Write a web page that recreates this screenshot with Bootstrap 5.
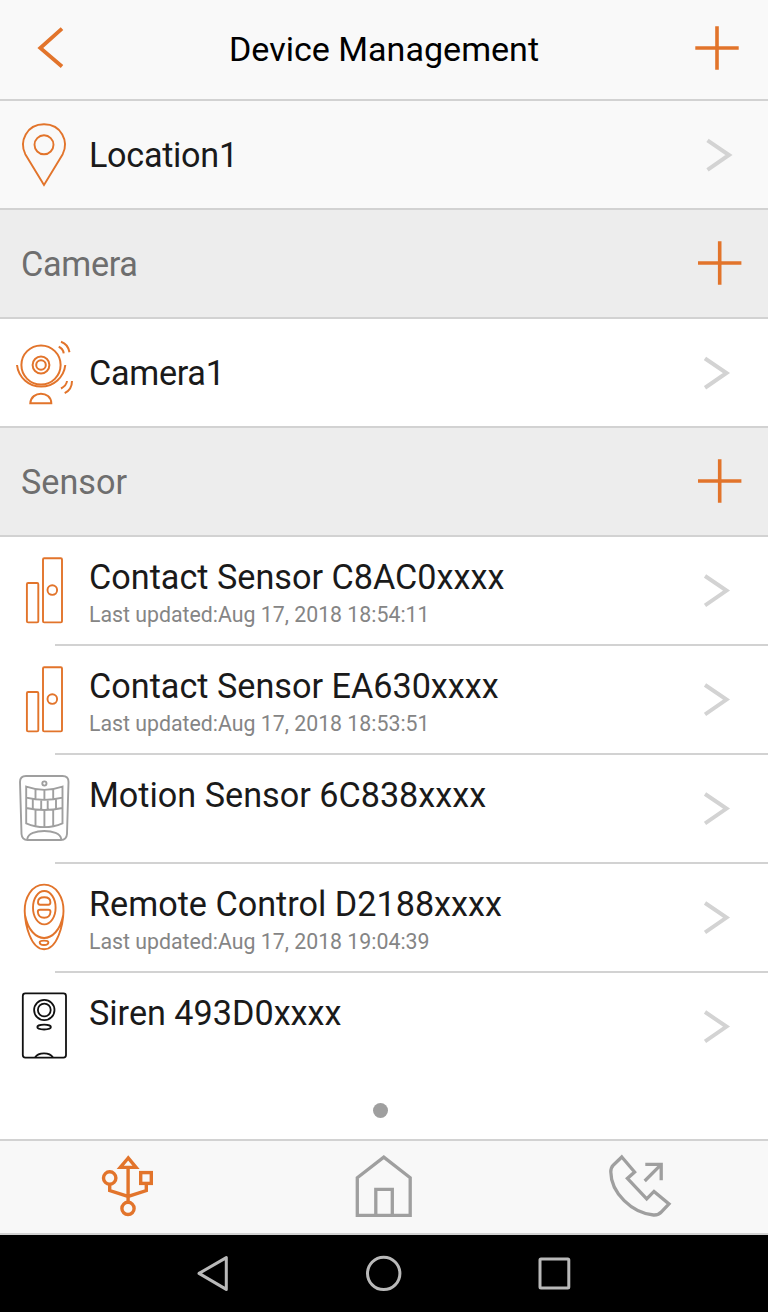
<!DOCTYPE html>
<html lang="en">
<head>
<meta charset="utf-8">
<meta name="viewport" content="width=device-width, initial-scale=1">
<title>Device Management</title>
<link href="https://cdn.jsdelivr.net/npm/bootstrap@5.3.0/dist/css/bootstrap.min.css" rel="stylesheet">
<style>
  :root { --accent: #e2742b; --line: #d2d2d2; --grey: #9f9f9f; }
  body { font-family: Roboto, "Liberation Sans", sans-serif; background: #fff; color: #1a1a1a; }
  .screen { width: 768px; height: 1312px; overflow: hidden; }
  svg { display: block; flex: none; fill: none; }
  .orange { stroke: var(--accent); }
  .grey { stroke: var(--grey); }
  .topbar { height: 101px; background: #f9f9f9; border-bottom: 2px solid var(--line); }
  .topbar h1 { font-size: 34.1px; line-height: 98px; color: #000; }
  .device-row { height: 109px; border-bottom: 2px solid var(--line); }
  .device-row.tinted { background: #f9f9f9; }
  .device-row.section { background: #ededed; color: #6e6e6e; padding-left: 21px; }
  .device-row.inset { border-bottom: 0; background: linear-gradient(var(--line), var(--line)) 55px 107px / 713px 2px no-repeat; }
  .device-row.final { border-bottom: 0; }
  .label { font-size: 34.2px; line-height: 42px; white-space: nowrap; margin-left: 1px; }
  .label.snug { letter-spacing: -.3px; }
  .align-items-center > .label { padding-top: 1px; }
  .stamp { font-size: 21.3px; line-height: 26px; color: #858585; margin-left: 1px; margin-top: 4px; white-space: nowrap; }
  .lines { padding-top: 19px; }
  .pager { height: 57px; }
  .dot { width: 15px; height: 15px; background: var(--grey); margin-right: 7px; margin-top: -1px; }
  .tabs { height: 96px; background: #f8f8f8; border-top: 2px solid var(--line); border-bottom: 2px solid var(--line); }
  .softkeys { height: 77px; background: #000; gap: 123px; }
  .softkeys svg { stroke: #b9b9b9; stroke-width: 3; stroke-linejoin: round; }
</style>
</head>
<body>
<svg width="0" height="0" class="position-absolute" aria-hidden="true">
  <symbol id="plus" viewBox="0 0 46 46"><path d="M23 1.3V44.7M1.3 23H44.7" stroke-width="3.6"/></symbol>
  <symbol id="next" viewBox="0 0 30 36"><path d="M3 3.4L24.5 18L3 32.8" stroke="#d3d3d3" stroke-width="4"/></symbol>
  <symbol id="contact" viewBox="0 0 88 107"><g stroke-width="1.9"><rect x="43" y="21.2" width="19" height="64.2" rx="1.2"/><rect x="26.9" y="46" width="11.4" height="39.4" rx="1.2"/><circle cx="52.3" cy="53.1" r="4.8"/></g></symbol>
</svg>
<main class="screen d-flex flex-column">
  <header class="topbar d-flex align-items-start justify-content-between flex-shrink-0">
    <svg class="orange" width="88" height="99"><path d="M62 28.7L40.3 48L62 66.5" stroke-width="3.8"/></svg>
    <h1 class="m-0 fw-normal">Device Management</h1>
    <svg class="orange" width="88" height="99"><use href="#plus" x="14" y="25" width="46" height="46"/></svg>
  </header>

  <div class="device-row tinted d-flex align-items-center flex-shrink-0">
    <svg class="orange" width="88" height="107" stroke-width="1.9"><path d="M44 84L25.3 53.2C19 40.5 26.5 23.3 44 23.3S69 40.5 62.7 53.2Z"/><circle cx="44" cy="43.8" r="9.5"/></svg>
    <div class="label snug">Location1</div>
    <svg class="ms-auto" width="64" height="107"><use href="#next" x="0.5" y="36" width="30" height="36"/></svg>
  </div>
  <div class="device-row section d-flex align-items-center flex-shrink-0">
    <div class="label snug ms-0">Camera</div>
    <svg class="orange ms-auto" width="88" height="107"><use href="#plus" x="16.7" y="30" width="46" height="46"/></svg>
  </div>
  <div class="device-row d-flex align-items-center flex-shrink-0">
    <svg class="orange" width="88" height="107" stroke-width="2"><circle cx="41" cy="46" r="19.6"/><circle cx="41" cy="46" r="8.4"/><circle cx="41" cy="46" r="4.8"/><path d="M17 46A24.3 24.3 0 0 0 65.3 46M30.3 84.3C31 71.5 51 71.5 51.3 84.3ZM61 22.7Q68 25 69.5 33.3M58.7 27.8Q63 29.5 63.7 34.3M67 62Q66.5 66.5 61 69.5M72 62Q72 70.5 64.7 74.2"/></svg>
    <div class="label snug">Camera1</div>
    <svg class="ms-auto" width="64" height="107"><use href="#next" x="-2" y="36" width="30" height="36"/></svg>
  </div>
  <div class="device-row section d-flex align-items-center flex-shrink-0">
    <div class="label ms-0">Sensor</div>
    <svg class="orange ms-auto" width="88" height="107"><use href="#plus" x="16.7" y="30" width="46" height="46"/></svg>
  </div>

  <div class="device-row inset d-flex flex-shrink-0">
    <svg class="orange" width="88" height="107"><use href="#contact" width="88" height="107"/></svg>
    <div class="lines"><div class="label">Contact Sensor C8AC0xxxx</div><div class="stamp">Last updated:Aug 17, 2018 18:54:11</div></div>
    <svg class="ms-auto" width="64" height="107"><use href="#next" x="-2" y="35.6" width="30" height="36"/></svg>
  </div>
  <div class="device-row inset d-flex flex-shrink-0">
    <svg class="orange" width="88" height="107"><use href="#contact" width="88" height="107"/></svg>
    <div class="lines"><div class="label">Contact Sensor EA630xxxx</div><div class="stamp">Last updated:Aug 17, 2018 18:53:51</div></div>
    <svg class="ms-auto" width="64" height="107"><use href="#next" x="-2" y="35.6" width="30" height="36"/></svg>
  </div>
  <div class="device-row inset d-flex flex-shrink-0">
    <svg class="grey" width="88" height="107" stroke-width="1.9"><path d="M26 21H62.5Q68.6 21 68.5 27L67 79Q66.5 85 61 85H27.5Q22 85 21.5 79L20 27Q20 21 26 21Z"/><circle cx="44.4" cy="28.5" r="2.1"/><path d="M26.2 31.7Q44.3 38 62.5 31.7V68.3Q44.3 76 26.2 68.3ZM26.2 42.7Q44.3 47 62.5 42.7M26.2 53Q44.3 57 62.5 53M35.5 34V44.5M44.4 35V45M53.2 34V44.5M32.8 44.5V54.5M41.2 45V55M47.7 45V55M56 44.5V54.5M35.5 54.5V71.5M44.4 55.2V72M53.2 54.5V71.5M27.3 84C28.5 73.3 60 73.3 61.2 84"/></svg>
    <div class="lines"><div class="label">Motion Sensor 6C838xxxx</div></div>
    <svg class="ms-auto" width="64" height="107"><use href="#next" x="-2" y="35.6" width="30" height="36"/></svg>
  </div>
  <div class="device-row inset d-flex flex-shrink-0">
    <svg class="orange" width="88" height="107" stroke-width="1.9"><path d="M44.1 20.6C31.5 20.6 24.5 34 24.7 47C25 60 30.5 85.2 44.1 85.2S63.2 60 63.5 47C63.7 34 56.7 20.6 44.1 20.6ZM25.2 52C28 66 36 74 44.1 74S60.2 66 63 52"/><ellipse cx="44.3" cy="43.7" rx="11.3" ry="16.7"/><path d="M38 38.3Q38 33.3 44.2 33.3T50.4 38.3Q50.4 40.7 48.5 40.7H40Q38 40.7 38 38.3ZM37.8 48Q37.8 45.8 40 45.8H48.5Q50.5 45.8 50.5 48Q50 53.7 44.2 53.7T37.8 48ZM39.7 78.2Q39.7 76.6 44 76.6T48.4 78.2Q48.3 81 44 81T39.7 78.2Z"/></svg>
    <div class="lines"><div class="label">Remote Control D2188xxxx</div><div class="stamp">Last updated:Aug 17, 2018 19:04:39</div></div>
    <svg class="ms-auto" width="64" height="107"><use href="#next" x="-2" y="35.6" width="30" height="36"/></svg>
  </div>
  <div class="device-row final d-flex flex-shrink-0">
    <svg width="88" height="107" stroke="#111" stroke-width="1.8"><rect x="22.8" y="20.4" width="43.2" height="64.2" rx="2.5"/><circle cx="44.3" cy="37" r="10.2"/><circle cx="44.3" cy="37" r="6.4"/><ellipse cx="44.1" cy="54.1" rx="6.8" ry="2.4"/><path d="M35.2 84.3Q37.5 80.3 44 80.3T52.8 84.3"/></svg>
    <div class="lines"><div class="label">Siren 493D0xxxx</div></div>
    <svg class="ms-auto" width="64" height="107"><use href="#next" x="-2" y="35.6" width="30" height="36"/></svg>
  </div>

  <div class="pager d-flex align-items-center justify-content-center flex-shrink-0"><span class="dot rounded-circle"></span></div>

  <nav class="tabs row row-cols-3 g-0 flex-shrink-0" aria-label="Main">
    <a class="col d-flex justify-content-center" href="#" aria-label="Devices">
      <svg class="orange" width="80" height="92" viewBox="88 1141 80 92" stroke-width="3.4"><circle cx="109.7" cy="1178" r="6.2"/><rect x="140.7" y="1172.6" width="10.6" height="10.8"/><path d="M128.2 1158L120.3 1167.4H136ZM128.1 1167V1202M109.7 1184V1190.5L128.1 1196.4L146.3 1190.5V1184"/><circle cx="128" cy="1208.4" r="6.1"/></svg>
    </a>
    <a class="col d-flex justify-content-center" href="#" aria-label="Home">
      <svg class="grey" width="80" height="92" viewBox="344 1141 80 92" stroke-width="3.3"><path d="M357.3 1215.3V1177.8L383.8 1157.2L410.2 1177.8V1215.3ZM375.8 1215V1189.4H392.3V1215" stroke-linejoin="miter"/></svg>
    </a>
    <a class="col d-flex justify-content-center" href="#" aria-label="Call">
      <svg class="grey" width="80" height="92" viewBox="600 1141 80 92" stroke-width="3.3"><path d="M621.8 1157L634.6 1172L627.4 1178.4L646.7 1198.8L654 1191.4L669 1204L661.7 1211.7Q658.5 1215.3 653.5 1215C632 1213 611 1193 610.8 1172Q610.8 1167.5 613.2 1165.2ZM645.3 1164.4H661.2V1180.2M644.7 1181L661 1164.7"/></svg>
    </a>
  </nav>
  <footer class="softkeys d-flex justify-content-center flex-shrink-0">
    <svg width="48" height="77" viewBox="189 1235 48 77"><path d="M199 1273.4L226.3 1257.6V1289.4Z"/></svg>
    <svg width="48" height="77" viewBox="360 1235 48 77"><circle cx="383.7" cy="1273.4" r="16.2"/></svg>
    <svg width="48" height="77" viewBox="531 1235 48 77"><rect x="540" y="1259" width="28.8" height="29" rx="1"/></svg>
  </footer>
</main>
<script src="https://cdn.jsdelivr.net/npm/bootstrap@5.3.0/dist/js/bootstrap.bundle.min.js"></script>
</body>
</html>
